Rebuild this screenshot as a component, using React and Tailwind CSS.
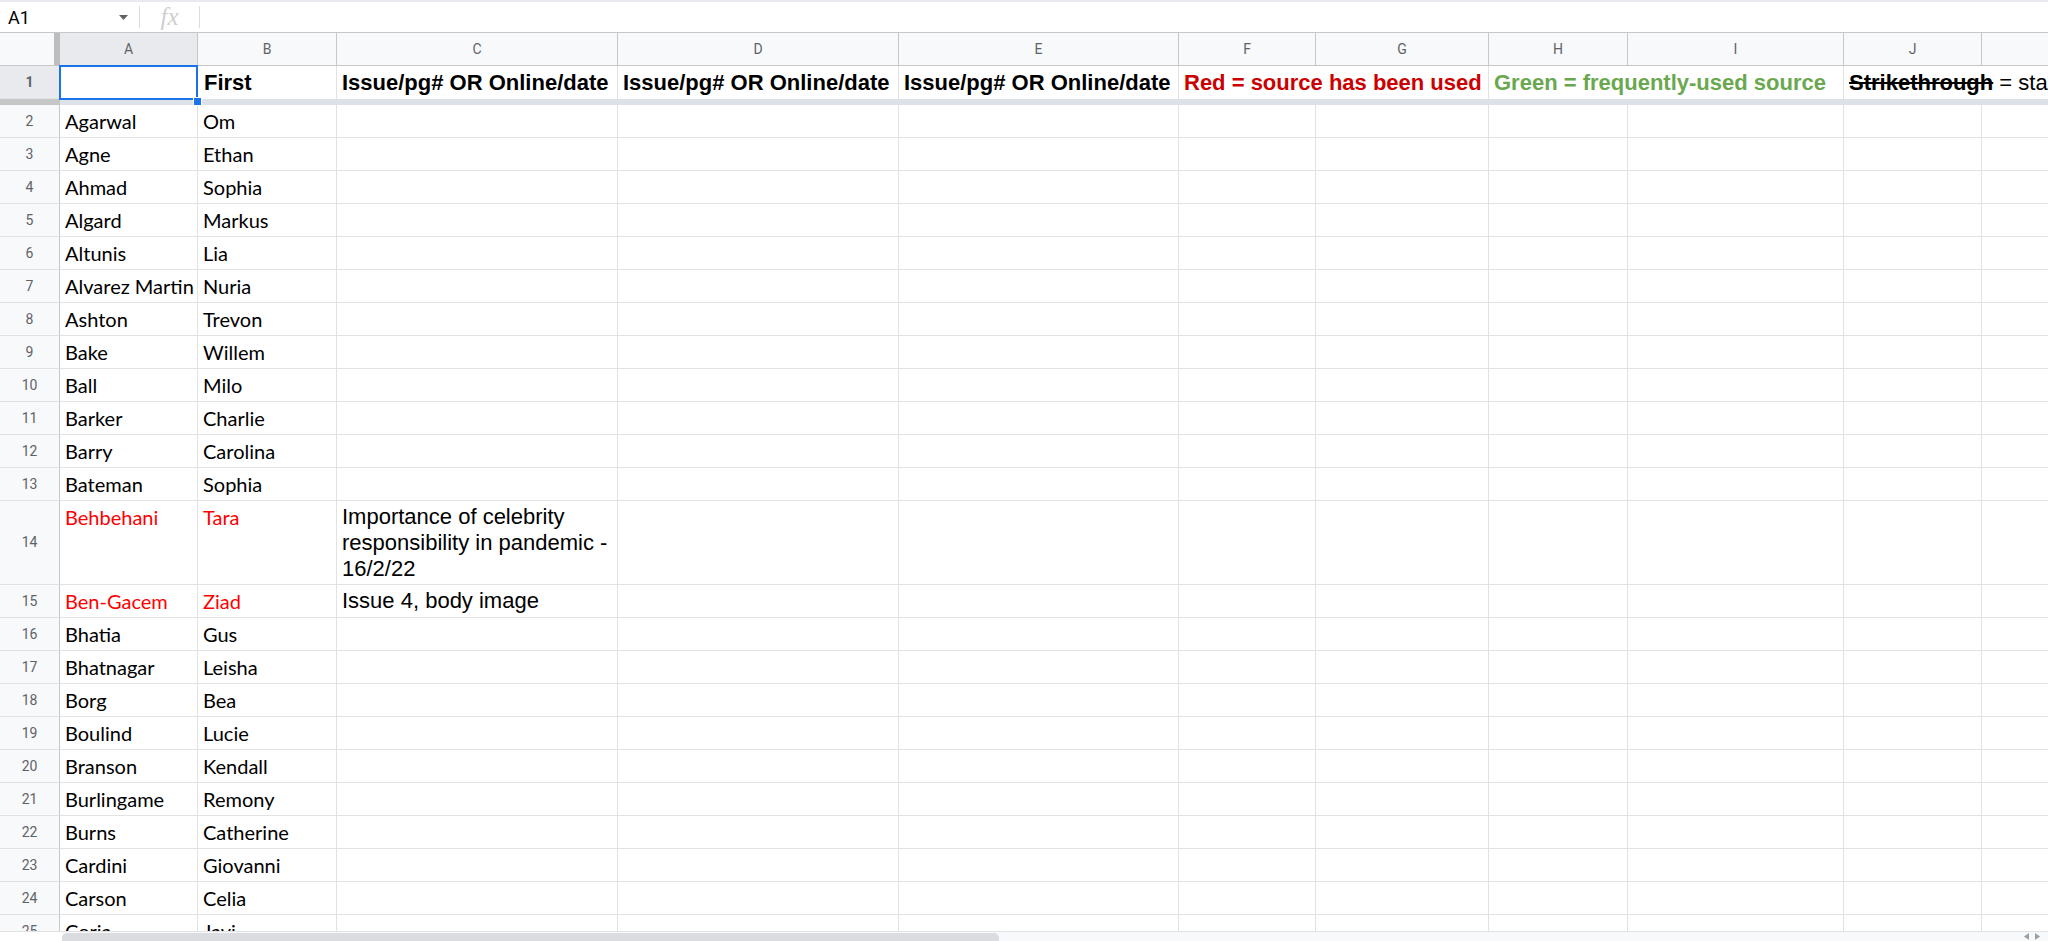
import React from 'react';

const restCols = [
  'w-[281px]',
  'w-[281px]',
  'w-[280px]',
  'w-[137px]',
  'w-[173px]',
  'w-[139px]',
  'w-[216px]',
  'w-[138px]',
  'w-[200px]',
];
const letters = ['C', 'D', 'E', 'F', 'G', 'H', 'I', 'J', 'K'];

const people = [
  [2, 'Agarwal', 'Om'],
  [3, 'Agne', 'Ethan'],
  [4, 'Ahmad', 'Sophia'],
  [5, 'Algard', 'Markus'],
  [6, 'Altunis', 'Lia'],
  [7, 'Alvarez Martin', 'Nuria'],
  [8, 'Ashton', 'Trevon'],
  [9, 'Bake', 'Willem'],
  [10, 'Ball', 'Milo'],
  [11, 'Barker', 'Charlie'],
  [12, 'Barry', 'Carolina'],
  [13, 'Bateman', 'Sophia'],
  [14, 'Behbehani', 'Tara', ['Importance of celebrity', 'responsibility in pandemic -', '16/2/22'], true],
  [15, 'Ben-Gacem', 'Ziad', ['Issue 4, body image'], true],
  [16, 'Bhatia', 'Gus'],
  [17, 'Bhatnagar', 'Leisha'],
  [18, 'Borg', 'Bea'],
  [19, 'Boulind', 'Lucie'],
  [20, 'Branson', 'Kendall'],
  [21, 'Burlingame', 'Remony'],
  [22, 'Burns', 'Catherine'],
  [23, 'Cardini', 'Giovanni'],
  [24, 'Carson', 'Celia'],
  [25, 'Coria', 'Javi'],
];

const RowHead = ({ n, active }) => (
  <div
    className={`w-[60px] shrink-0 border-r border-b border-r-[#c7c7c7] border-b-[#e2e2e2] flex items-center justify-center font-['Roboto',sans-serif] text-[14px] text-[#5f6368] ${
      active ? 'bg-[#e8eaed]' : 'bg-[#f8f9fa]'
    }`}
  >
    {n}
  </div>
);

const Row = ({ n, last, first, c, red }) => {
  const tall = n === 14;
  const nameColor = red ? 'text-[#ff0000]' : 'text-black';
  return (
    <div className={`flex shrink-0 ${tall ? 'h-[84px]' : 'h-[33px]'}`}>
      <RowHead n={n} />
      <div className={`w-[138px] shrink-0 border-r border-b border-[#e2e2e2] pl-[5px] pt-[3px] font-['Lato',sans-serif] text-[20px] leading-[26px] whitespace-nowrap overflow-hidden ${nameColor}`}>
        {last}
      </div>
      <div className={`w-[139px] shrink-0 border-r border-b border-[#e2e2e2] pl-[5px] pt-[3px] font-['Lato',sans-serif] text-[20px] leading-[26px] whitespace-nowrap overflow-hidden ${nameColor}`}>
        {first}
      </div>
      {restCols.map((w, i) => (
        <div key={i} className={`${w} shrink-0 border-r border-b border-[#e2e2e2] pl-[5px] pt-[3px] font-['Liberation_Sans',Arial,sans-serif] text-[22px] leading-[26px] text-black whitespace-nowrap overflow-hidden`}>
          {i === 0 && c ? c.map((line) => <div key={line}>{line}</div>) : null}
        </div>
      ))}
    </div>
  );
};

export default function App() {
  return (
    <div className="w-[2048px] h-[941px] overflow-hidden bg-white flex flex-col">
      {/* formula bar */}
      <div className="h-[33px] shrink-0 flex items-center border-t-[2px] border-t-[#e8eaed] border-b border-b-[#c7c7c7] font-['Roboto',sans-serif]">
        <div className="w-[139px] shrink-0 flex items-center justify-between pl-[8px] pr-[11px]">
          <span className="text-[18px] text-black">A1</span>
          <svg width="9" height="5" viewBox="0 0 9 5">
            <path d="M0 0h9L4.5 5z" fill="#5f6368" />
          </svg>
        </div>
        <div className="w-px h-[22px] bg-[#dadce0]" />
        <div className="w-[59px] shrink-0 flex items-center justify-center font-['Liberation_Serif',serif] italic text-[25px] text-[#cfcfcf]">
          fx
        </div>
        <div className="w-px h-[22px] bg-[#dadce0]" />
      </div>

      {/* column headers */}
      <div className="h-[33px] shrink-0 flex font-['Roboto',sans-serif] text-[14px] text-[#5f6368]">
        <div className="w-[60px] shrink-0 flex border-b border-[#c7c7c7] bg-[#f8f9fa]">
          <div className="flex-1" />
          <div className="w-[6px] bg-[#bdbdbd]" />
        </div>
        <div className="w-[138px] shrink-0 bg-[#e8eaed] border-r border-b border-[#c7c7c7] flex items-center justify-center">A</div>
        <div className="w-[139px] shrink-0 bg-[#f8f9fa] border-r border-b border-[#c7c7c7] flex items-center justify-center">B</div>
        {restCols.map((w, i) => (
          <div key={i} className={`${w} shrink-0 bg-[#f8f9fa] border-r border-b border-[#c7c7c7] flex items-center justify-center`}>
            {letters[i]}
          </div>
        ))}
      </div>

      {/* row 1 */}
      <div className="h-[33px] shrink-0 flex font-['Liberation_Sans',Arial,sans-serif] text-[22px] font-bold leading-[26px] text-black">
        <RowHead n={1} active />
        <div className="w-[138px] shrink-0 relative border-r border-[#e2e2e2]">
          <div className="absolute -left-px -top-px -right-px -bottom-px border-2 border-[#1a73e8]" />
          <div className="absolute -right-[5px] -bottom-[7px] w-[9px] h-[9px] bg-[#1a73e8] border border-white z-10" />
        </div>
        <div className="w-[139px] shrink-0 border-r border-[#e2e2e2] pl-[6px] flex items-center">First</div>
        <div className="w-[281px] shrink-0 border-r border-[#e2e2e2] pl-[5px] flex items-center whitespace-nowrap">Issue/pg# OR Online/date</div>
        <div className="w-[281px] shrink-0 border-r border-[#e2e2e2] pl-[5px] flex items-center whitespace-nowrap">Issue/pg# OR Online/date</div>
        <div className="w-[280px] shrink-0 border-r border-[#e2e2e2] pl-[5px] flex items-center whitespace-nowrap">Issue/pg# OR Online/date</div>
        <div className="w-[310px] shrink-0 border-r border-[#e2e2e2] pl-[5px] flex items-center whitespace-nowrap text-[#cc0000]">Red = source has been used</div>
        <div className="w-[355px] shrink-0 border-r border-[#e2e2e2] pl-[5px] flex items-center whitespace-nowrap text-[#6aa84f]">Green = frequently-used source</div>
        <div className="w-[338px] shrink-0 pl-[5px] flex items-center whitespace-nowrap">
          <span className="line-through">Strikethrough</span>
          <span className="font-normal">&nbsp;= stale source</span>
        </div>
      </div>

      {/* freeze bar */}
      <div className="h-[6px] shrink-0 flex">
        <div className="w-[60px] shrink-0 bg-[#c4c7c5]" />
        <div className="flex-1 bg-[#dde1e8]" />
      </div>

      {/* body */}
      <div className="flex-1 overflow-hidden flex flex-col">
        {people.map(([n, last, first, c, red]) => (
          <Row key={n} n={n} last={last} first={first} c={c} red={red} />
        ))}
      </div>

      {/* horizontal scrollbar */}
      <div className="h-[10px] shrink-0 flex items-end bg-[#f8f9fa] border-t border-[#e2e2e2]">
        <div className="w-[62px] shrink-0 h-full bg-white" />
        <div className="w-[937px] h-[8px] rounded-t-[5px] bg-[#dadce0]" />
        <div className="flex-1" />
        <div className="flex items-end gap-[6px] pr-[8px] pb-[1px]">
          <svg width="5" height="7" viewBox="0 0 5 7">
            <path d="M5 0v7L0 3.5z" fill="#9aa0a6" />
          </svg>
          <svg width="5" height="7" viewBox="0 0 5 7">
            <path d="M0 0v7l5-3.5z" fill="#9aa0a6" />
          </svg>
        </div>
      </div>
    </div>
  );
}
